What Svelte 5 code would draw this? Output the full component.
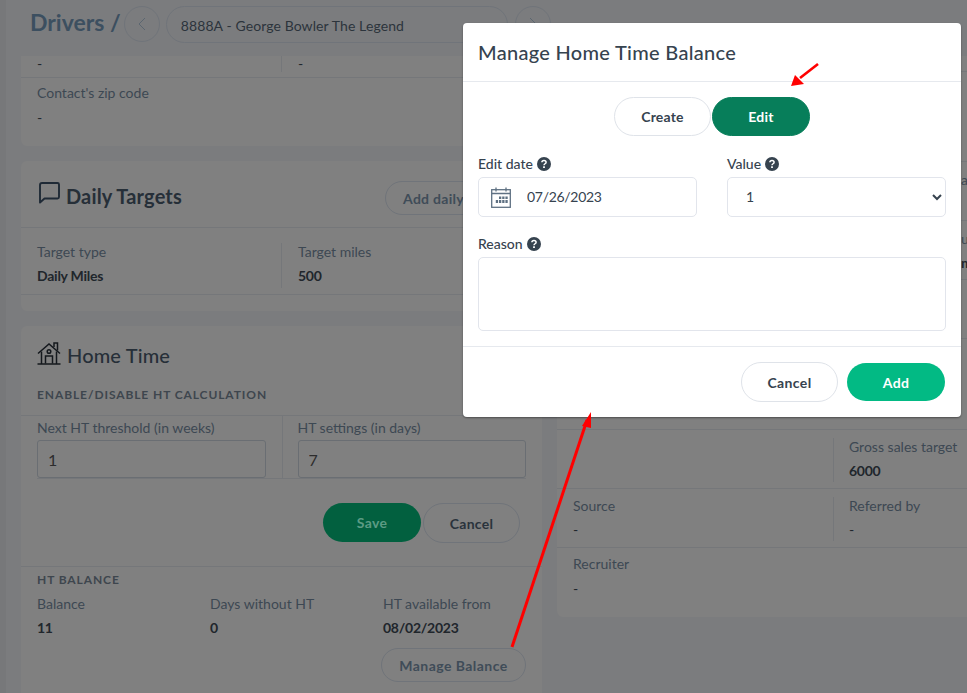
<script>
  let editDate = $state('07/26/2023');
  let value = $state('1');
  let reason = $state('');
  let mode = $state('edit');

  const balance = [
    { label: 'Balance', value: '11' },
    { label: 'Days without HT', value: '0' },
    { label: 'HT available from', value: '08/02/2023' }
  ];

  // rows of the right card, only their right end shows beside the modal
  const peekRows = [
    { h: 16 },
    { h: 90 },
    { h: 59, label: 'a' },
    { h: 59, label: 'u', value: 'm' },
    { h: 59 },
    { h: 91 }
  ];
</script>

<div class="page">
  <header class="topbar">
    <h1>Drivers /</h1>
    <button class="round-btn" aria-label="Previous">
      <svg viewBox="0 0 16 16" width="16" height="16"><path d="M11 2L5 8l6 6" fill="none" stroke="currentColor" stroke-width="1"/></svg>
    </button>
    <div class="driver-select">8888A - George Bowler The Legend</div>
    <button class="round-btn next" aria-label="Next">
      <svg viewBox="0 0 16 16" width="16" height="16"><path d="M5 2l6 6-6 6" fill="none" stroke="currentColor" stroke-width="1"/></svg>
    </button>
  </header>

  <div class="columns">
    <div class="col">
      <section class="card contact">
        <div class="row two clipped">
          <div class="cell"><span class="value dash">-</span></div>
          <div class="cell"><span class="value dash">-</span></div>
        </div>
        <div class="row-single">
          <span class="label">Contact's zip code</span>
          <span class="value dash">-</span>
        </div>
      </section>

      <section class="card targets">
        <div class="card-head">
          <svg class="head-icon" viewBox="0 0 24 24" width="24" height="24"><path d="M5 3h15.5a1.5 1.5 0 0 1 1.500 1.500V17a1.500 1.500 0 0 1-1.500 1.500H7.500L3 22.500V5a2 2 0 0 1 2-2z" fill="none" stroke="#1f2a36" stroke-width="1.9" stroke-linejoin="round"/></svg>
          <h2>Daily Targets</h2>
          <button class="pill add-daily">Add daily target</button>
        </div>
        <div class="row two">
          <div class="cell"><span class="label">Target type</span><span class="value">Daily Miles</span></div>
          <div class="cell"><span class="label">Target miles</span><span class="value">500</span></div>
        </div>
      </section>

      <section class="card home">
        <div class="home-head">
          <svg class="home-icon" viewBox="0 0 24 24" width="24" height="24" fill="none" stroke="#14181d" stroke-width="1.5">
            <path d="M1 12.500L12 3l11 9.500"/>
            <path d="M17 6V2h3.500v7.500"/>
            <path d="M4.500 10.500V22.500M19.500 10.500V22.500M0.500 23h23"/>
            <path d="M8.500 22.500V15h7v7.500"/>
            <circle cx="12" cy="10.500" r="1.800"/>
          </svg>
          <h2>Home Time</h2>
        </div>
        <h3 class="caps">ENABLE/DISABLE HT CALCULATION</h3>
        <div class="settings">
          <div class="field">
            <span class="label">Next HT threshold (in weeks)</span>
            <input class="dim-input" value="1" />
          </div>
          <div class="field">
            <span class="label">HT settings (in days)</span>
            <input class="dim-input" value="7" />
          </div>
        </div>
        <div class="save-row">
          <button class="pill solid-dim">Save</button>
          <button class="pill cancel-dim">Cancel</button>
        </div>
        <div class="balance">
          <h3 class="caps">HT BALANCE</h3>
          <div class="balance-grid">
            {#each balance as item}
              <div class="stat">
                <span class="label">{item.label}</span>
                <span class="value">{item.value}</span>
              </div>
            {/each}
          </div>
          <div class="manage-row">
            <button class="pill manage">Manage Balance</button>
          </div>
        </div>
      </section>
    </div>

    <div class="col right">
      <section class="card info">
        {#each peekRows as row}
          <div class="peek-row" style="height: {row.h}px">
            {#if row.label}
              <span class="label">{row.label}</span>
            {/if}
            {#if row.value}
              <span class="value">{row.value}</span>
            {/if}
          </div>
        {/each}
        <div class="row info-row">
          <div class="cell"></div>
          <div class="cell"><span class="label">Gross sales target</span><span class="value">6000</span></div>
        </div>
        <div class="row info-row">
          <div class="cell"><span class="label">Source</span><span class="value dash">-</span></div>
          <div class="cell"><span class="label">Referred by</span><span class="value dash">-</span></div>
        </div>
        <div class="row-single">
          <span class="label">Recruiter</span>
          <span class="value dash">-</span>
        </div>
      </section>
    </div>
  </div>

  <div class="modal">
    <div class="modal-title">Manage Home Time Balance</div>
    <div class="modal-body">
      <div class="toggle">
        <button class="tbtn" class:on={mode === 'create'} onclick={() => (mode = 'create')}>Create</button>
        <button class="tbtn" class:on={mode === 'edit'} onclick={() => (mode = 'edit')}>Edit</button>
      </div>
      <div class="form-grid">
        <div class="form-field">
          <span class="flabel">Edit date
            <svg class="help" viewBox="0 0 14 14" width="14" height="14"><circle cx="7" cy="7" r="7" fill="#36434f"/><path d="M4.900 5.300c0-1.200 1-1.900 2.100-1.900s2.100.7 2.100 1.800c0 1.600-2.100 1.500-2.100 3" fill="none" stroke="#fff" stroke-width="1.500"/><rect x="6.100" y="9.300" width="1.800" height="1.700" fill="#fff"/></svg>
          </span>
          <div class="date-box">
            <svg viewBox="0 0 20 21" width="20" height="21" fill="none" stroke="#5f7183" stroke-width="1.300">
              <rect x="0.700" y="2.700" width="18.600" height="17.600"/>
              <path d="M0.700 6.500h18.600M5 0.500v4M15 0.500v4" />
              <path d="M8 9.500h2.300v2.500H8zM11.200 9.500h2.300v2.500h-2.300zM14.400 9.500h2.300v2.500h-2.300zM4.800 13h2.300v3H4.800zM8 13h2.300v3H8zM11.200 13h2.300v3h-2.300zM14.400 13h2.300v3h-2.300z" fill="#5f7183" stroke="none"/>
            </svg>
            <input class="date-input" bind:value={editDate} />
          </div>
        </div>
        <div class="form-field">
          <span class="flabel">Value
            <svg class="help" viewBox="0 0 14 14" width="14" height="14"><circle cx="7" cy="7" r="7" fill="#36434f"/><path d="M4.900 5.300c0-1.200 1-1.900 2.100-1.900s2.100.7 2.100 1.800c0 1.600-2.100 1.500-2.100 3" fill="none" stroke="#fff" stroke-width="1.500"/><rect x="6.100" y="9.300" width="1.800" height="1.700" fill="#fff"/></svg>
          </span>
          <select class="select" bind:value>
            <option value="1">1</option>
            <option value="2">2</option>
          </select>
        </div>
        <div class="form-field wide">
          <span class="flabel">Reason
            <svg class="help" viewBox="0 0 14 14" width="14" height="14"><circle cx="7" cy="7" r="7" fill="#36434f"/><path d="M4.900 5.300c0-1.200 1-1.900 2.100-1.900s2.100.7 2.100 1.800c0 1.600-2.100 1.500-2.100 3" fill="none" stroke="#fff" stroke-width="1.500"/><rect x="6.100" y="9.300" width="1.800" height="1.700" fill="#fff"/></svg>
          </span>
          <textarea class="reason" bind:value={reason}></textarea>
        </div>
      </div>
    </div>
    <div class="modal-foot">
      <button class="mbtn outline">Cancel</button>
      <button class="mbtn add">Add</button>
    </div>
  </div>

  <!-- annotation arrows drawn over the screenshot -->
  <svg class="arrows" viewBox="0 0 967 693" width="967" height="693">
    <path d="M512 647L587 420" stroke="#ff0000" stroke-width="3" fill="none"/>
    <path d="M591 412L582 426L591 428z" fill="#ff0000"/>
    <path d="M818 64L800 78" stroke="#ff0000" stroke-width="2.600" fill="none"/>
    <path d="M791 86L795 75L804 84z" fill="#ff0000"/>
  </svg>
</div>

<style>
  :global(body) {
    margin: 0;
    background: #7c7d7f;
    font-family: "Lato", "Open Sans", sans-serif;
  }

  .page {
    position: relative;
    width: 967px;
    height: 693px;
    overflow: hidden;
    background: #7b7c7e;
    box-shadow: inset 6px 0 0 #77787a;
    color: #1f2a36;
  }

  .topbar {
    height: 56px;
    display: flex;
    align-items: center;
    gap: 6px;
    padding: 0 0 8px 30px;
    box-sizing: border-box;
  }

  h1 {
    margin: -4px -3px 0 0;
    font-size: 23px;
    font-weight: 700;
    color: #3c4f60;
  }

  .round-btn {
    width: 36px;
    height: 36px;
    border-radius: 50%;
    border: 1px solid #70747a;
    background: transparent;
    color: #5b6670;
    padding: 0;
    display: flex;
    align-items: center;
    justify-content: center;
  }

  .next {
    margin-left: 1px;
  }

  .driver-select {
    width: 342px;
    height: 37px;
    box-sizing: border-box;
    border: 1px solid #70747a;
    border-radius: 19px;
    padding: 2px 14px 0;
    display: flex;
    align-items: center;
    font-size: 14px;
    letter-spacing: 0.1px;
    color: #2c343c;
  }

  .columns {
    display: grid;
    grid-template-columns: 521px 520px;
    gap: 15px;
    padding-left: 21px;
    height: 637px;
    overflow: hidden;
  }

  .col {
    display: flex;
    flex-direction: column;
    gap: 15px;
  }

  .card {
    background: #808080;
    border-radius: 6px;
    box-sizing: border-box;
  }

  .contact {
    height: 90px;
    border-radius: 0 0 6px 6px;
  }

  .label {
    display: block;
    font-size: 14px;
    line-height: 17px;
    color: #3d4853;
  }

  .value {
    display: block;
    margin-top: 7px;
    font-size: 14px;
    line-height: 17px;
    font-weight: 700;
    letter-spacing: -0.25px;
    color: #20262c;
  }

  .dash {
    font-weight: 400;
  }

  .row {
    display: grid;
    grid-template-columns: 260px 1fr;
    border-bottom: 1px solid #75777a;
  }

  .cell {
    padding: 0 16px;
    border-left: 1px solid #75777a;
  }

  .cell:first-child {
    border-left: 0;
  }

  .clipped {
    height: 21px;
  }

  .clipped .value {
    margin-top: 0;
    line-height: 16px;
  }

  .row-single {
    padding: 6px 16px 0;
  }

  .row-single .value {
    margin-top: 8px;
  }

  .row .cell {
    margin-bottom: 6px;
  }

  .targets {
    height: 150px;
  }

  .card-head {
    height: 67px;
    box-sizing: border-box;
    display: flex;
    align-items: center;
    padding: 4px 16px 0;
    border-bottom: 1px solid #75777a;
  }

  .head-icon {
    margin-right: 5px;
    margin-top: -9px;
  }

  h2 {
    margin: 0;
    font-size: 20px;
    font-weight: 700;
    letter-spacing: 0.15px;
    color: #262f38;
  }

  .pill {
    border-radius: 20px;
    font-family: inherit;
    font-size: 14px;
    font-weight: 700;
    letter-spacing: 0.3px;
    box-sizing: border-box;
  }

  .add-daily {
    margin: 4px -19px 0 auto;
    height: 34px;
    width: 160px;
    padding: 0 17px;
    text-align: left;
    white-space: nowrap;
    border: 1px solid #70747a;
    background: transparent;
    color: #3f4c58;
  }

  .targets .row {
    box-sizing: border-box;
    height: 67px;
    padding-top: 15px;
  }

  .home {
    height: 380px;
    padding-top: 1px;
  }

  .home-head {
    display: flex;
    align-items: center;
    gap: 6px;
    padding: 13px 16px 0;
    height: 30px;
  }

  .home-head h2 {
    font-weight: 500;
  }

  .home-icon {
    margin-top: -4px;
  }

  .caps {
    margin: 0;
    font-size: 12px;
    line-height: 15px;
    font-weight: 700;
    letter-spacing: 0.9px;
    color: #3e464e;
  }

  .home > .caps {
    padding: 17px 16px 0;
    height: 28px;
    border-bottom: 1px solid #75777a;
  }

  .settings {
    display: grid;
    grid-template-columns: 1fr 1fr;
    margin: 0 16px;
    border-bottom: 1px solid #75777a;
  }

  .field {
    padding-top: 3px;
  }

  .field + .field {
    border-left: 1px solid #75777a;
    padding-left: 15px;
  }

  .field:first-child {
    padding-right: 16px;
  }

  .dim-input {
    display: block;
    width: 100%;
    height: 38px;
    margin-top: 4px;
    box-sizing: border-box;
    border: 1px solid #6a6e73;
    border-radius: 3px;
    background: transparent;
    padding: 0 10px;
    font-family: inherit;
    font-size: 16px;
    color: #2c2c2c;
  }

  .save-row {
    display: flex;
    justify-content: flex-end;
    gap: 2px;
    padding: 24px 22px 0 0;
    height: 63px;
    border-bottom: 1px solid #75777a;
  }

  .solid-dim {
    width: 98px;
    height: 39px;
    border: 0;
    background: #02603f;
    color: #5c9b84;
  }

  .cancel-dim {
    width: 97px;
    height: 40px;
    border: 1px solid #70747a;
    background: transparent;
    color: #2a333c;
  }

  .balance {
    padding: 5px 16px 0;
  }

  .balance-grid {
    display: grid;
    grid-template-columns: repeat(3, 173px);
    margin-top: 8px;
  }

  .manage-row {
    display: flex;
    justify-content: flex-end;
    margin-top: 12px;
  }

  .manage {
    width: 145px;
    height: 34px;
    padding: 0;
    letter-spacing: 0.45px;
    border: 1px solid #70747a;
    background: transparent;
    color: #3f4c58;
  }

  .info {
    height: 561px;
  }

  .info .row-single {
    padding-top: 7px;
  }

  .peek-row {
    box-sizing: border-box;
    padding: 9px 0 0 404px;
    border-bottom: 1px solid #75777a;
    overflow: hidden;
  }

  .info-row {
    grid-template-columns: 276px 1fr;
    height: 59px;
    padding-top: 8px;
    box-sizing: border-box;
  }

  .info-row .cell + .cell {
    padding-left: 15px;
  }

  .modal {
    position: absolute;
    left: 463px;
    top: 23px;
    width: 498px;
    height: 394px;
    background: #fff;
    border-radius: 4px;
    box-shadow: 0 1px 2px rgba(0, 0, 0, 0.4);
    display: flex;
    flex-direction: column;
    color: #36434f;
  }

  .modal-title {
    height: 59px;
    box-sizing: border-box;
    padding: 16px 15px 0;
    font-size: 20px;
    line-height: 26px;
    font-weight: 500;
    border-bottom: 1px solid #e6e9ee;
    letter-spacing: 0.3px;
  }

  .modal-body {
    flex: 1;
    padding: 15px 15px 0;
  }

  .toggle {
    display: flex;
    justify-content: center;
    gap: 1px;
  }

  .tbtn {
    width: 97px;
    height: 39px;
    border: 1px solid #dfe3e9;
    border-radius: 20px;
    background: #fff;
    font-family: inherit;
    font-size: 14px;
    font-weight: 700;
    letter-spacing: 0.2px;
    color: #36434f;
    padding: 0;
  }

  .tbtn.on {
    width: 98px;
    background: #077e5a;
    border-color: #077e5a;
    color: #fff;
  }

  .form-grid {
    display: grid;
    grid-template-columns: 219px 219px;
    column-gap: 30px;
    row-gap: 18px;
    margin-top: 19px;
  }

  .wide {
    grid-column: 1 / 3;
  }

  .flabel {
    display: flex;
    align-items: center;
    gap: 4px;
    height: 17px;
    font-size: 14px;
    font-weight: 500;
    color: #36434f;
    margin-bottom: 5px;
  }

  .date-box,
  .select {
    height: 40px;
    box-sizing: border-box;
    border: 1px solid #e2e5ec;
    border-radius: 5px;
    background: #fff;
  }

  .date-box {
    display: flex;
    align-items: center;
    gap: 16px;
    padding-left: 12px;
  }

  .date-input {
    border: 0;
    outline: 0;
    width: 120px;
    padding: 0 0 1px;
    font-family: inherit;
    font-size: 14px;
    letter-spacing: -0.3px;
    color: #36434f;
  }

  .select {
    width: 100%;
    padding: 0 0 1px 14px;
    font-family: inherit;
    font-size: 14px;
    color: #36434f;
  }

  .reason {
    display: block;
    width: 100%;
    height: 74px;
    box-sizing: border-box;
    border: 1px solid #e2e5ec;
    border-radius: 5px;
    resize: none;
  }

  .modal-foot {
    height: 71px;
    box-sizing: border-box;
    border-top: 1px solid #e6e9ee;
    display: flex;
    justify-content: flex-end;
    align-items: flex-start;
    gap: 9px;
    padding: 15px 16px 0;
  }

  .mbtn {
    width: 97px;
    height: 40px;
    border-radius: 20px;
    font-family: inherit;
    font-size: 14px;
    font-weight: 700;
    padding: 0;
    letter-spacing: 0.4px;
  }

  .outline {
    border: 1px solid #dfe3e9;
    background: #fff;
    color: #36434f;
  }

  .add {
    width: 98px;
    height: 38px;
    margin-top: 1px;
    border: 0;
    background: #02ba84;
    color: #fff;
  }

  .arrows {
    position: absolute;
    left: 0;
    top: 0;
    pointer-events: none;
  }
</style>
